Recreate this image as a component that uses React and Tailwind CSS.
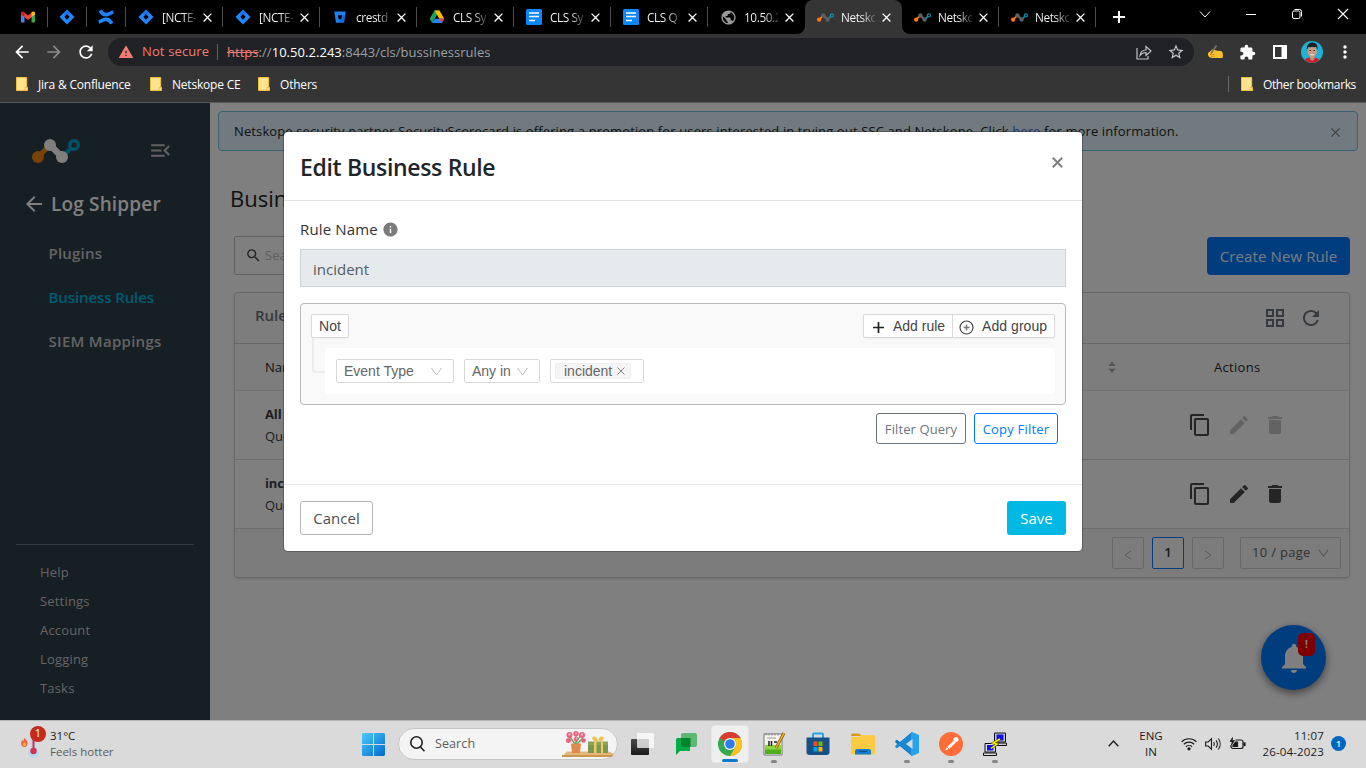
import React from "react";
import {
  MdArrowBack, MdArrowForward, MdRefresh, MdMenuOpen, MdSearch, MdGridView,
  MdContentCopy, MdEdit, MdDelete, MdNotifications, MdExtension, MdStarBorder,
  MdMoreVert, MdWarning, MdClose, MdPublic, MdInfo,
} from "react-icons/md";

const JiraIcon = () => (
  <svg className="size-4 shrink-0" viewBox="0 0 16 16">
    <path d="M8 .5 15.5 8 8 15.5.5 8z" fill="#1f87ff" />
    <path d="M8 .5 11.5 4 8 7 5 4.500z" fill="#0a62d8" opacity=".5" />
    <path d="M8 5.300 10.700 8 8 10.700 5.300 8z" fill="#000" />
  </svg>
);

const ConfluenceIcon = () => (
  <svg className="size-4 shrink-0" viewBox="0 0 16 16">
    <path d="M.6 2.200 3.800.6C6 4.200 8 4.600 11.500 2.800L14.500 1.300l1.300 3.200-3.300 1.700C7 9 3.500 7.500.6 2.200z" fill="#1f7ff5" />
    <path d="M15.400 13.800l-3.200 1.600C10 11.800 8 11.400 4.500 13.200L1.500 14.700.2 11.500l3.300-1.700C9 7 12.500 8.500 15.400 13.800z" fill="#1f87ff" />
  </svg>
);

const GmailIcon = () => (
  <svg className="h-[12px] w-4 shrink-0" viewBox="0 0 16 12">
    <path d="M1 2v8.500c0 .6.400 1 1 1h2.500V5z" fill="#4285f4" />
    <path d="M15 2v8.500c0 .6-.4 1-1 1h-2.500V5z" fill="#34a853" />
    <path d="M4 1.300 8 4.500l4-3.200V6L8 9 4 6z" fill="#ea4335" />
    <path d="M1 2.200C1 .5 2.500-.1 3.800.9L4.500 1.300V6L1 3.400z" fill="#c5221f" />
    <path d="M15 2.200c0-1.700-1.500-2.300-2.800-1.300l-.7.400V6L15 3.400z" fill="#fbbc04" />
  </svg>
);

const BitbucketIcon = () => (
  <svg className="size-4 shrink-0" viewBox="0 0 16 16">
    <path d="M2.300 2.500h11.400L12 13.800H4z" fill="#1f7ff5" />
    <path d="M6 6.300h4l-.6 4H6.600z" fill="#000" />
    <path d="M13.300 6.300H10l-.6 4-3.500 3.500H12z" fill="#0a5bd0" opacity=".6" />
  </svg>
);

const DriveIcon = () => (
  <svg className="size-4 shrink-0" viewBox="0 0 16 16">
    <path d="M5.500 1.500h5L8 5.700 3.200 14 .7 9.800z" fill="#13a35d" />
    <path d="M5.500 1.500h5L15.300 9.800h-5z" fill="#ffba00" />
    <path d="M5.700 9.800h9.600L12.800 14H3.200z" fill="#2684fc" />
    <path d="M10.300 9.800h5L12.800 14z" fill="#ea4335" />
  </svg>
);

const DocsIcon = () => (
  <svg className="size-4 shrink-0" viewBox="0 0 16 16">
    <rect width="16" height="16" rx="1.500" fill="#0b87fb" />
    <path d="M3 4h10M3 7.500h10M3 11.500h6" stroke="#fff" strokeWidth="1.600" />
  </svg>
);

const NetskopeMark = ({ className, tone = "#595959", orange = "#f58220", blue = "#1193b5" }) => (
  <svg className={className} viewBox="0 0 48 24">
    <path d="M6 18 18 6" stroke={orange} strokeWidth="5" />
    <path d="M18 6 30 18" stroke={tone} strokeWidth="6.500" />
    <path d="M30 18 38 10" stroke={blue} strokeWidth="4.500" />
    <circle cx="6" cy="18" r="6" fill={orange} />
    <circle cx="18" cy="6" r="6" fill={tone} />
    <circle cx="30" cy="18" r="6" fill={tone} />
    <circle cx="42" cy="6" r="4.300" fill="none" stroke={blue} strokeWidth="3.400" />
  </svg>
);

const NetskopeFav = () => (
  <NetskopeMark className="h-[9px] w-[17px] shrink-0" orange="#ff7a0f" tone="#5d6063" blue="#1191b3" />
);

const Folder = () => (
  <svg className="h-[14px] w-[12px] shrink-0" viewBox="0 0 12 14">
    <path d="M.5.500h10.200v9.500l1 .500v3H.5z" fill="#ffe38d" stroke="#f3bd3f" />
    <path d="M9 13.500v-3h2" fill="none" stroke="#f3bd3f" />
  </svg>
);

const tabs = [
  { icon: <JiraIcon />, title: "[NCTE-" },
  { icon: <JiraIcon />, title: "[NCTE-" },
  { icon: <BitbucketIcon />, title: "crestd" },
  { icon: <DriveIcon />, title: "CLS Sy" },
  { icon: <DocsIcon />, title: "CLS Sy" },
  { icon: <DocsIcon />, title: "CLS Q" },
  { icon: <MdPublic className="size-[17px] shrink-0 text-[#9a9a9a]" />, title: "10.50.2", last: true },
  { icon: <NetskopeFav />, title: "Netsko", active: true },
  { icon: <NetskopeFav />, title: "Netsko" },
  { icon: <NetskopeFav />, title: "Netsko" },
];

function Tab({ icon, title, active, last }) {
  return (
    <div className={active ? "relative flex h-[34px] w-[97px] items-center rounded-t-[8px] bg-[#353535] pl-3" : "relative flex h-[34px] w-[97px] items-center pl-3"}>
      <div className="flex w-4 shrink-0 justify-center">{icon}</div>
      <div className="ml-2 w-[34px] overflow-hidden bg-linear-to-r from-white from-60% to-white/20 bg-clip-text text-[11.800px] leading-5 tracking-[-0.4px] whitespace-nowrap text-transparent">{title}</div>
      <MdClose className="ml-[4px] size-[15px] shrink-0 text-white" />
      {!active && !last && <div className="ml-auto h-5 w-px bg-[#4d4d4d]" />}
      {active && (
        <>
          <svg className="absolute bottom-0 -left-2 size-2" viewBox="0 0 8 8"><path d="M8 0v8H0a8 8 0 0 0 8-8z" fill="#353535" /></svg>
          <svg className="absolute -right-2 bottom-0 size-2" viewBox="0 0 8 8"><path d="M0 0v8h8a8 8 0 0 1-8-8z" fill="#353535" /></svg>
        </>
      )}
    </div>
  );
}

function TabStrip() {
  return (
    <div className="flex h-[34px] shrink-0 items-center bg-black pl-[9px]">
      {[<GmailIcon key="g" />, <JiraIcon key="j" />, <ConfluenceIcon key="c" />].map((icon, i) => (
        <div key={i} className="flex h-[34px] w-[39px] items-center justify-between pl-[11px]">
          {icon}
          <div className="h-5 w-px bg-[#4d4d4d]" />
        </div>
      ))}
      {tabs.map((t, i) => <Tab key={i} {...t} />)}
      <svg className="ml-[17px] size-3" viewBox="0 0 12 12"><path d="M6 0v12M0 6h12" stroke="#fff" strokeWidth="2" /></svg>
      <div className="mb-[6px] ml-auto flex w-[167px] items-center gap-[34px]">
        <svg className="size-3 shrink-0" viewBox="0 0 12 12"><path d="M1 3.500 6 9l5-5.500" fill="none" stroke="#fff" /></svg>
        <svg className="size-3 shrink-0" viewBox="0 0 12 12"><path d="M1 6.500h10" stroke="#fff" /></svg>
        <svg className="size-3 shrink-0" viewBox="0 0 12 12" fill="none" stroke="#fff"><rect x="1.500" y="3" width="7.500" height="7.500" rx="1.500" /><path d="M3.500 1.500H8.500a2 2 0 0 1 2 2V8.500" /></svg>
        <svg className="size-3 shrink-0" viewBox="0 0 12 12"><path d="M1 1l10 10M11 1 1 11" stroke="#fff" strokeWidth="1.100" /></svg>
      </div>
    </div>
  );
}

function Toolbar() {
  return (
    <div className="flex h-9 shrink-0 items-center bg-[#353535] pl-[12px]">
      <MdArrowBack className="size-5 text-white" />
      <MdArrowForward className="ml-3 size-5 text-[#8a8a8a]" />
      <MdRefresh className="ml-3 size-5 text-white" />
      <div className="ml-[12px] flex h-7 w-[1086px] items-center rounded-full bg-[#202124] pl-[10px]">
        <MdWarning className="size-4 text-[#f47c73]" />
        <span className="ml-[8px] w-[68px] text-[13px] tracking-[0.13px] whitespace-nowrap text-[#f47c73]">Not secure</span>
        <div className="ml-[7px] h-4 w-px bg-[#606164]" />
        <div className="mt-px ml-[9px] flex text-[13px] tracking-[0.040px] whitespace-nowrap text-[#9aa0a6]">
          <span className="text-[#f47c73] line-through">https</span>://<span className="text-white">10.50.2.243</span>:8443/cls/bussinessrules
        </div>
        <svg className="ml-auto size-4" viewBox="0 0 16 16" fill="none" stroke="#c0c2c5" strokeWidth="1.200"><path d="M1 4v11h11v-3" /><path d="M4 11.500c.5-4 2.500-5.500 6-5.500V2.500L15 7l-5 4.500V8.500c-3 0-4.500 1-6 3z" /></svg>
        <MdStarBorder className="mr-[9px] ml-[15px] size-[18px] text-[#c8c9cb]" />
      </div>
      <svg className="ml-[13px] size-4" viewBox="0 0 16 16"><path d="M1 9 6 5 9 6.500l5.500.8c1.500.7 1.700 4.700 1 6.700H5.500C2.500 14 .5 12 1 9z" fill="#fbc02d" /><path d="M4 9.500 9.500 1.500" stroke="#777" strokeWidth="1.600" /><path d="M3 10.500h4.500M4 12.300h3.500" stroke="#c98a14" strokeWidth=".7" /></svg>
      <MdExtension className="ml-[16px] size-[17px] text-white" />
      <svg className="ml-[17px] h-[14px] w-[14px]" viewBox="0 0 14 14"><path d="M0 0h14v14H0zM2 2v10h6.500V2z" fill="#fff" fillRule="evenodd" /></svg>
      <svg className="ml-[14px] size-[22px]" viewBox="0 0 22 22">
        <circle cx="11" cy="11" r="11" fill="#1fb2d6" />
        <path d="M3.500 19C5 17 8 16.500 11 16.500s6 .5 7.500 2.500a11 11 0 0 1-15 0z" fill="#c8202c" />
        <path d="M9 14h4.500v4L11 20l-2-2z" fill="#c58d70" />
        <ellipse cx="11.200" cy="10.500" rx="4.500" ry="6" fill="#cf9a80" />
        <path d="M5.800 9C5.500 3.500 8 1.500 11.500 1.500c4 0 5.500 3 5 7.500l-1.300-3-8 .2z" fill="#1d2227" />
        <path d="M9.500 13.500q1.700 1 3.500 0" stroke="#fff" fill="none" strokeWidth=".8" />
        <path d="M8.500 9.500h1.500M12.500 9.500H14" stroke="#40241a" />
      </svg>
      <MdMoreVert className="ml-[12px] size-5 text-white" />
    </div>
  );
}

function Bookmarks() {
  return (
    <div className="flex h-[33px] shrink-0 items-center border-b border-[#5a5a5a] bg-[#353535] pr-[10px] pb-[4px] pl-4 text-[12px] tracking-[-0.2px] whitespace-nowrap text-white">
      <Folder /><span className="mt-px ml-[10px] w-[112px]">Jira &amp; Confluence</span>
      <Folder /><span className="mt-px ml-[10px] w-[86px]">Netskope CE</span>
      <Folder /><span className="mt-px ml-[10px]">Others</span>
      <div className="ml-auto h-4 w-px bg-[#6b6b6b]" />
      <div className="ml-[12px]"><Folder /></div><span className="mt-px ml-[10px] w-[93px] tracking-[-0.37px]">Other bookmarks</span>
    </div>
  );
}

function Sidebar() {
  return (
    <div className="flex w-[210px] shrink-0 flex-col bg-[#2d3e48]">
      <div className="mt-[36px] flex h-6 items-center pl-8">
        <NetskopeMark className="h-6 w-12" tone="#fff" orange="#f5820a" blue="#00a3cc" />
        <MdMenuOpen className="mb-[2px] ml-[68px] size-[25px] text-[#c4c4c4]" />
      </div>
      <div className="mt-[26px] flex h-[30px] items-center pl-[22px]">
        <MdArrowBack className="size-6 text-white" />
        <span className="ml-[5px] text-[19px] font-semibold tracking-[0.16px] text-white">Log Shipper</span>
      </div>
      <div className="mt-[12px] flex flex-col pl-[48.500px] text-[15px] font-semibold tracking-[-0.1px] text-[#c8c8c8]">
        <div className="flex h-11 items-center tracking-[0.2px]">Plugins</div>
        <div className="flex h-11 items-center text-[#00b7e0]">Business Rules</div>
        <div className="flex h-11 items-center tracking-[0.280px]">SIEM Mappings</div>
      </div>
      <div className="mx-4 mt-auto border-t border-[#6b757b]" />
      <div className="mt-[13px] mb-[17px] flex flex-col pl-10 text-[13px] tracking-[0.18px] text-[#c8c8c8]">
        {["Help", "Settings", "Account", "Logging", "Tasks"].map((t) => (
          <div key={t} className="flex h-[29px] items-center">{t}</div>
        ))}
      </div>
    </div>
  );
}

function Row({ name, muted }) {
  return (
    <div className="flex h-[69px] items-center justify-between border-b border-[#dadada] bg-white pl-[30px]">
      <div className="text-[13px] leading-[22px] tracking-[-0.1px] text-[#3c4045]">
        <div className="font-bold">{name}</div>
        <div>Query: filters</div>
      </div>
      <div className="mr-[62px] flex items-center text-[#4a4a4a]">
        <MdContentCopy className="size-6" />
        <MdEdit className={muted ? "ml-[15px] size-6 text-[#c6c6c6]" : "ml-[15px] size-6"} />
        <MdDelete className={muted ? "ml-3 size-6 text-[#c6c6c6]" : "ml-3 size-6"} />
      </div>
    </div>
  );
}

function MainPage() {
  return (
    <div className="flex min-w-0 flex-1 flex-col bg-white px-2 pt-2">
      <div className="flex h-10 shrink-0 items-center rounded-[4px] border border-[#70c4e0] bg-[#e2f5fc] pr-[15px] pl-[15px] text-[13px] tracking-[0.120px] whitespace-nowrap text-[#202428]">
        <span className="mt-[2px]">Netskope security partner SecurityScorecard is offering a promotion for users interested in trying out SSC and Netskope. Click <span className="text-[#3f6ff0]">here</span> for more information.</span>
        <svg className="mt-[2px] ml-auto size-[13px]" viewBox="0 0 14 14"><path d="M2.500 2.500l9 9M11.500 2.500l-9 9" stroke="#777" strokeWidth="1.100" /></svg>
      </div>
      <div className="mt-[30px] pl-3 text-[22px] leading-[34px] text-[#212529]">Business Rules</div>
      <div className="mt-[21px] flex items-center justify-between pr-2 pl-4">
        <div className="flex h-[39px] w-[300px] items-center rounded-[2px] border border-[#c4c4c4] pl-[10px] text-[13px] text-[#bcbcbc]">
          <MdSearch className="size-[17px] text-[#444]" /><span className="ml-[3px]">Search</span>
        </div>
        <div className="flex h-[38px] w-[143px] items-center justify-center rounded-[4px] bg-[#007bff] pt-px text-[15px] tracking-[0.1px] text-[#f2f6ff]">Create New Rule</div>
      </div>
      <div className="mt-[17px] mr-2 ml-4 flex flex-col rounded-[4px] border border-[#d0d0d0] bg-[#fafafa] shadow-sm">
        <div className="flex h-[51px] items-center justify-between border-b border-[#d0d0d0] pr-[26px] pl-5">
          <span className="mb-[6px] text-[15px] font-semibold text-[#6c757d]">Rules</span>
          <div className="flex gap-3 text-[#6c757d]"><MdGridView className="size-6" /><MdRefresh className="size-6" /></div>
        </div>
        <div className="flex h-[47px] items-center border-b border-[#e6e6e6] pl-[30px] text-[13px] font-medium text-[#26292d]">
          <span className="mt-[2px]">Name</span>
          <svg className="mt-px ml-auto h-[13px] w-[8px]" viewBox="0 0 10 15" fill="#aaa"><path d="M5 .5 9.500 5.500h-9zM5 14 .5 9h9z" /></svg>
          <span className="mt-[2px] mr-[87px] ml-[98px] w-12 tracking-[0.3px]">Actions</span>
        </div>
        <Row name="All" muted />
        <Row name="incident" />
        <div className="flex h-[48px] items-center justify-end gap-2 rounded-b-[4px] bg-[#f8f8f8] pr-2 text-[13px]">
          <div className="flex size-8 items-center justify-center rounded-[2px] border border-[#d0d0d0] text-[#b5b5b5]"><svg className="mt-1 size-3" viewBox="0 0 12 12"><path d="M9 2 3 6 9 10" fill="none" stroke="currentColor" /></svg></div>
          <div className="flex size-8 items-center justify-center rounded-[2px] border border-[#007bff] bg-white font-semibold text-[#333]">1</div>
          <div className="flex size-8 items-center justify-center rounded-[2px] border border-[#d0d0d0] text-[#b5b5b5]"><svg className="mt-1 size-3" viewBox="0 0 12 12"><path d="M3 2 9 6 3 10" fill="none" stroke="currentColor" /></svg></div>
          <div className="ml-2 flex h-8 w-[101px] items-center rounded-[2px] border border-[#d0d0d0] pl-[11px] whitespace-nowrap text-[#666]">
            <span className="w-[59px] tracking-[0.300px]">10 / page</span>
            <svg className="ml-[7px] size-[11px]" viewBox="0 0 12 12"><path d="M1 2l5 7 5-7" fill="none" stroke="#aaa" strokeWidth="1.100" /></svg>
          </div>
        </div>
      </div>
    </div>
  );
}

const Caret = () => (
  <svg className="size-[11px]" viewBox="0 0 11 11"><path d="M.5 2l5 7 5-7" fill="none" stroke="#bdbdbd" /></svg>
);

function Modal() {
  return (
    <div className="absolute top-[29px] left-[284px] flex h-[419px] w-[798px] flex-col rounded-[4px] bg-white shadow-[0_0_0_1px_rgba(0,0,0,0.25)]">
      <div className="flex h-[69px] shrink-0 items-center border-b border-[#dee2e6] pr-[19px] pl-4">
        <span className="mt-[2px] text-[23px] font-semibold tracking-[-0.330px] text-[#212529]">Edit Business Rule</span>
        <svg className="mb-[7px] ml-auto size-[11px]" viewBox="0 0 11 11"><path d="M.8.800l9.400 9.400M10.200.800.800 10.200" stroke="#808080" strokeWidth="2" /></svg>
      </div>
      <div className="flex flex-1 flex-col px-4">
        <div className="mt-[16px] flex h-6 items-center">
          <span className="text-[15px] tracking-[0.150px] text-[#333]">Rule Name</span>
          <MdInfo className="mt-px ml-[4px] size-[17px] text-[#7b7b7b]" />
        </div>
        <div className="mt-[8px] flex h-[38px] items-center border border-[#ced4da] bg-[#e6eaed] pt-[2px] pl-3 text-[15px] text-[#545b62]">incident</div>
        <div className="mt-4 h-[102px] rounded-[4px] border border-[#b9b9b9] bg-[#f9f9f9] px-[10px] pt-[10px] font-['Liberation_Sans',sans-serif] text-[14px] text-[#444]">
          <div className="flex justify-between">
            <div className="flex h-6 w-[38px] items-center justify-center rounded-[2px] border border-[#d9d9d9] bg-white shadow-[0_1px_1px_rgba(0,0,0,0.04)]">Not</div>
            <div className="flex h-6 rounded-[2px] border border-[#d9d9d9] bg-white whitespace-nowrap shadow-[0_1px_1px_rgba(0,0,0,0.04)]">
              <div className="flex w-[89px] items-center border-r border-[#d9d9d9] pl-[9px]">
                <svg className="mt-[2px] size-[11px]" viewBox="0 0 11 11"><path d="M5.500 0v11M0 5.500h11" stroke="#222" strokeWidth="1.700" /></svg>
                <span className="ml-[9px]">Add rule</span>
              </div>
              <div className="flex w-[101px] items-center pl-[6px]">
                <svg className="mt-[2px] size-[15px]" viewBox="0 0 15 15" fill="none"><circle cx="7.500" cy="7.500" r="6.500" stroke="#444" strokeWidth="1.200" /><path d="M7.500 4.500v6M4.500 7.500h6" stroke="#777" strokeWidth="1.500" /></svg>
                <span className="ml-[8px] tracking-[0.060px]">Add group</span>
              </div>
            </div>
          </div>
          <div className="flex">
            <div className="mr-0 ml-px h-[35px] w-[13px] rounded-bl-[4px] border-b-2 border-l-2 border-[#ececec]" />
            <div className="mt-[10px] flex h-[46px] flex-1 items-center gap-[10px] rounded-[4px] bg-white pl-[11px] text-[#666]">
              <div className="flex h-6 w-[118px] items-center justify-between rounded-[2px] border border-[#d9d9d9] pr-[11px] pl-[7px]"><span>Event Type</span><Caret /></div>
              <div className="flex h-6 w-[76px] items-center justify-between rounded-[2px] border border-[#d9d9d9] pr-[11px] pl-[7px] whitespace-nowrap"><span>Any in</span><Caret /></div>
              <div className="flex h-6 w-[94px] items-center rounded-[2px] border border-[#d9d9d9] pl-1">
                <div className="flex h-4 w-[76px] items-center rounded-[2px] border border-[#efefef] bg-[#f5f5f5] pl-2">
                  <span className="leading-4">incident</span>
                  <svg className="mb-px ml-[5px] size-[8px]" viewBox="0 0 8 8"><path d="M.5.500l7 7M7.500.500l-7 7" stroke="#808080" /></svg>
                </div>
              </div>
            </div>
          </div>
        </div>
        <div className="mt-2 mr-2 flex justify-end gap-2 text-[13px] whitespace-nowrap">
          <div className="flex h-[31px] w-[90px] items-center justify-center rounded-[3px] border border-[#6c757d] pt-[2px] tracking-[0.1px] text-[#6c757d]">Filter Query</div>
          <div className="flex h-[31px] w-[84px] items-center justify-center rounded-[3px] border border-[#007bff] pt-[2px] tracking-[0.200px] text-[#007bff]">Copy Filter</div>
        </div>
      </div>
      <div className="flex h-[67px] shrink-0 items-center justify-between border-t border-[#e2e4e6] px-4 text-[15px]">
        <div className="flex h-[34px] w-[73px] items-center justify-center rounded-[3px] border border-[#b5b5b5] text-[#505050]">Cancel</div>
        <div className="flex h-[34px] w-[59px] items-center justify-center rounded-[3px] bg-[#00b8e4] text-white">Save</div>
      </div>
    </div>
  );
}

const taskIcons = [
  { el: <svg className="size-6" viewBox="0 0 24 24"><defs><linearGradient id="tv" x1="0" y1="0" x2="0" y2="1"><stop stopColor="#484848" /><stop offset="1" stopColor="#1c1c1c" /></linearGradient></defs><rect x="1" y="7" width="18" height="16" rx="1" fill="url(#tv)" /><rect x="7" y="1" width="17" height="15" rx="1" fill="#fff" opacity=".75" /></svg> },
  { el: <svg className="size-6" viewBox="0 0 24 24"><path d="M2 8c0-1.500 1-2 2-2h12v13H6l-4 4z" fill="#00ac47" /><rect x="7" y="1" width="16" height="14" rx="2" fill="#5bb974" /><path d="M7 6h9.500v9H9a2 2 0 0 1-2-2z" fill="#00832d" /></svg> },
  {
    active: true,
    el: <svg className="size-6" viewBox="0 0 24 24"><circle cx="12" cy="12" r="12" fill="#34a853" /><path d="M12 0a12 12 0 0 1 10.400 6H12a6 6 0 0 0-5.200 3L1.600 6A12 12 0 0 1 12 0z" fill="#dd3b30" /><path d="M22.400 6A12 12 0 0 1 12 24l5.200-9a6 6 0 0 0 0-6L14 6z" fill="#fcc31e" /><circle cx="12" cy="12" r="6" fill="#fff" /><circle cx="12" cy="12" r="4.800" fill="#2f7de9" /></svg>,
  },
  {
    dot: true,
    el: <svg className="size-6" viewBox="0 0 24 24"><path d="M2 2h18v21H2z" fill="#f4f4ee" stroke="#777" /><path d="M3 13h16v9H3z" fill="#8ed63f" /><path d="M3 17.500h16V22H3z" fill="#4fae1c" /><path d="M4 1v2.500M7 1v2.500M10 1v2.500M13 1v2.500M16 1v2.500" stroke="#888" /><path d="M5 6h9" stroke="#999" /><path d="M7 9v5M9.500 9v5M12 10h3" stroke="#222" strokeWidth="1.500" /><path d="M14 16 22 1" stroke="#8a5a14" strokeWidth="3" /><path d="M14 16 22 1" stroke="#f3b61f" strokeWidth="1.500" /></svg>,
  },
  { el: <svg className="size-6" viewBox="0 0 24 24"><path d="M7 6V2.500a1 1 0 0 1 1-1h8a1 1 0 0 1 1 1V6" fill="none" stroke="#20a5ea" strokeWidth="2" /><path d="M.5 5.500h23V20a3 3 0 0 1-3 3h-17a3 3 0 0 1-3-3z" fill="#174f87" /><path d="M7.500 9.500h4V14h-4z" fill="#f25022" /><path d="M12.500 9.500h4V14h-4z" fill="#7fba00" /><path d="M7.500 15h4v4.500h-4z" fill="#00a4ef" /><path d="M12.500 15h4v4.500h-4z" fill="#ffb900" /></svg> },
  { el: <svg className="size-6" viewBox="0 0 24 24"><path d="M0 3a1.500 1.500 0 0 1 1.500-1.500H8L11 4H0z" fill="#dc9b12" /><path d="M0 5h8l3-2h11.500A1.500 1.500 0 0 1 24 4.500V21a1.500 1.500 0 0 1-1.500 1.500h-21A1.500 1.500 0 0 1 0 21z" fill="#fdcb43" /><path d="M4 22.500V19a2 2 0 0 1 2-2h12a2 2 0 0 1 2 2v3.500z" fill="#157cd0" /><path d="M8 19.500h8" stroke="#0a4d8c" strokeWidth="1.200" /></svg> },
  {
    dot: true,
    el: <svg className="size-6" viewBox="0 0 24 24"><path d="M17 0 5.500 10.500 2 7.800.300 8.700v1.500L17 24z" fill="#0a73bd" /><path d="M17 24 5.500 13.500 2 16.200.300 15.300v-1.500L17 0z" fill="#1787d2" /><path d="M17 0l7 3v18l-7 3-1-1V1z" fill="#27a3ee" /><path d="M17.500 7v10L11 12z" fill="#d9d9d9" /></svg>,
  },
  {
    dot: true,
    el: <svg className="size-6" viewBox="0 0 24 24"><circle cx="12" cy="12" r="12" fill="#ff6c37" /><path d="M6 18.500l2-3.500 7-6.500 2 2-7 6.500z" fill="#fff" /><circle cx="17" cy="7.500" r="2.500" fill="#fff" /><path d="M8 15l2 2" stroke="#ff6c37" strokeWidth=".8" /></svg>,
  },
  {
    dot: true,
    el: <svg className="size-6" viewBox="0 0 24 24"><path d="M11.500 1h11v9h-11zM11 11h12.500v2.500H11z" fill="#c6cad0" stroke="#111" /><path d="M13.500 2.500h7v6h-7z" fill="#1010e0" /><path d="M2 11.500h10.500V20H2zM.5 21h13v2.500H.5z" fill="#dcdfe3" stroke="#111" /><path d="M4 13h6.500v5.500H4z" fill="#1010e0" /><path d="M17 7 10 11l4 1-6 4.500" stroke="#333" strokeWidth="2.400" fill="none" /><path d="M17 7 10 11l4 1-6 4.500" stroke="#ffee00" strokeWidth="1.500" fill="none" /></svg>,
  },
];

function SearchArt() {
  return (
    <svg className="ml-auto h-[26px] w-[52px]" viewBox="0 0 52 26">
      <path d="M5 20.500h42l5 2.500-1.500 2.500H0z" fill="#e3b67c" />
      <path d="M0 24h51l-1 2H0z" fill="#c99656" />
      <path d="M13 13 8 6M14 13 14 4M15 13 21 7M13 13 19 4" stroke="#5d9a4d" strokeWidth="1.300" />
      <g fill="#e5627f"><circle cx="7.500" cy="4" r="3" /><circle cx="14" cy="2.800" r="2.700" /><circle cx="20" cy="4" r="3" /><circle cx="6.500" cy="9.500" r="2.500" /><circle cx="21.500" cy="9.500" r="2.300" /><circle cx="14" cy="8" r="2.300" /></g>
      <g fill="#f8b3c4"><circle cx="7.500" cy="3.500" r="1.200" /><circle cx="20" cy="3.500" r="1.200" /><circle cx="14.500" cy="7.500" r="1" /><circle cx="14" cy="2.500" r="1" /></g>
      <path d="M9 12.500h10l-1 9.500h-8z" fill="#e08a4c" />
      <path d="M26 10.500h20v11.500H26z" fill="#8ba35a" />
      <path d="M26 14h20v8H26z" fill="#7a9650" />
      <path d="M32 10.500h2.500V22H32zM39 10.500h2V22h-2z" fill="#f0cb62" />
      <path d="M36 10.500c-7 0-7-5.500-3.500-5 2 .4 3.500 2.500 3.500 5zm0 0c7 0 7-5.500 3.500-5-2 .4-3.500 2.500-3.500 5z" fill="#eec257" />
    </svg>
  );
}

function Taskbar() {
  return (
    <div className="flex h-12 shrink-0 items-center border-t border-[#b4b4b4] bg-[#dadada] text-[11.500px] text-[#1b1b1b]">
      <div className="flex w-[362px] items-center pl-5">
        <div className="relative mb-[2px] h-8 w-[30px]">
          <svg className="size-full" viewBox="0 0 30 32">
            <path d="M4.500 10C6 12 8 13 7.500 16c-.5 2.500-2 3-3.200 3S1 18 1 15.500C1 13.500 2 13 2.500 12c.5 1 1 1 1 1 .5-1 0-2 1-3z" fill="#f4623c" />
            <path d="M4.500 14c1 1 1.500 2 1.300 3-.3 1.300-2.700 1.300-3 0-.2-1.300 1-1.500 1.700-3z" fill="#ffb63d" />
            <path d="M10.500 8h6v12a5.500 5.500 0 1 1-6 0z" fill="#b9d9f2" />
            <path d="M12.500 10h2v11h-2z" fill="#d62f50" /><circle cx="13.500" cy="23" r="3.200" fill="#d62f50" />
          </svg>
          <div className="absolute top-[-2px] left-[10px] flex size-4 items-center justify-center rounded-full bg-[#c42b1c] text-[11px] text-white">1</div>
        </div>
        <div className="mb-[2px] leading-4 whitespace-nowrap"><div>31°C</div><div className="text-[#5c5c5c]">Feels hotter</div></div>
      </div>
      <svg className="size-[23px]" viewBox="0 0 23 23">
        <defs><linearGradient id="win" x1="0" y1="0" x2="1" y2="1"><stop stopColor="#4ccbfb" /><stop offset="1" stopColor="#0069cf" /></linearGradient></defs>
        <path d="M1 0h10v11H0V1zM12 0h10l1 1v10H12zM0 12h11v11H1l-1-1zM12 12h11v10l-1 1H12z" fill="url(#win)" />
      </svg>
      <div className="mb-px ml-[13px] flex h-8 w-[220px] items-center rounded-full border border-[#c6c6c6] bg-[#f4f4f4] pr-[3px] pl-[10px]">
        <svg className="size-4" viewBox="0 0 16 16" fill="none" stroke="#1f1f1f" strokeWidth="1.600"><circle cx="7.500" cy="6.500" r="5.700" /><path d="M11.500 11l4 4.300" /></svg>
        <span className="mt-px ml-[10px] text-[12.500px] tracking-[0.1px] text-[#5c5c5c]">Search</span>
        <SearchArt />
      </div>
      <div className="mb-px ml-[2px] flex">
        {taskIcons.map((t, i) => (
          <div key={i} className="flex h-12 w-[44.100px] flex-col items-center justify-center">
            <div className={t.active ? "relative flex h-[38px] w-[38px] items-center justify-center rounded-[4px] border border-[#e6e6e6] bg-[#efefef]" : "relative flex h-[38px] w-[38px] items-center justify-center"}>
              {t.el}
              {t.active && <div className="absolute bottom-0 left-[10px] h-[3px] w-4 rounded-full bg-[#0d78d4]" />}
              {t.dot && <div className="absolute bottom-0 left-4 h-[3px] w-[6px] rounded-full bg-[#858585]" />}
            </div>
          </div>
        ))}
      </div>
      <div className="mb-[2px] ml-auto flex items-center pr-5">
        <svg className="h-[7px] w-[11px]" viewBox="0 0 11 7"><path d="M.7 6.200 5.500 1l4.800 5.200" fill="none" stroke="#222" strokeWidth="1.400" /></svg>
        <div className="ml-[19px] w-[26px] text-center leading-4"><div>ENG</div><div>IN</div></div>
        <svg className="ml-[17px] h-[14px] w-4" viewBox="0 0 16 14" fill="none" stroke="#1b1b1b" strokeWidth="1.200"><path d="M.6 4.800a10.500 10.500 0 0 1 14.800 0M2.800 7.300a7.400 7.400 0 0 1 10.400 0M5 9.700a4.300 4.300 0 0 1 6 0" /><circle cx="8" cy="11.800" r="1" fill="#1b1b1b" /></svg>
        <svg className="ml-2 h-[14px] w-[17px]" viewBox="0 0 17 14" fill="none" stroke="#1b1b1b" strokeWidth="1.100"><path d="M.6 5h2.500L6.500 1.800v10.400L3.100 9H.6zM8.700 5a3.500 3.500 0 0 1 0 4M11 3.300a6 6 0 0 1 0 7.400M13.300 1.500a9 9 0 0 1 0 11" /></svg>
        <svg className="ml-[7px] h-[14px] w-[17px]" viewBox="0 0 17 14" fill="none" stroke="#1b1b1b" strokeWidth="1.200"><path d="M6.500 3H12a2 2 0 0 1 2 2v4.500a2 2 0 0 1-2 2H4a2 2 0 0 1-2-2V8" /><path d="M15 6h1v2.500h-1z" fill="#1b1b1b" /><path d="M4 8.500 6.500 5H8.500v4.500H4z" fill="#1b1b1b" /><path d="M3.500.500 1 4.500h2.200L2.500 8 5.500 3.500H3.300z" fill="#1b1b1b" strokeWidth=".7" /></svg>
        <div className="ml-[14px] w-[64px] text-right leading-4 tracking-[0.150px] whitespace-nowrap"><div>11:07</div><div>26-04-2023</div></div>
        <div className="ml-[7px] flex size-[15px] items-center justify-center rounded-full bg-[#0067c0] text-[9px] font-semibold text-white">1</div>
      </div>
    </div>
  );
}

export default function App() {
  return (
    <div className="flex h-[768px] w-[1366px] flex-col overflow-hidden font-['Open_Sans','Noto_Sans',sans-serif]">
      <TabStrip />
      <Toolbar />
      <Bookmarks />
      <div className="relative flex min-h-0 flex-1 overflow-hidden">
        <Sidebar />
        <MainPage />
        <div className="absolute top-[522px] left-[1261px] flex size-[65px] items-center justify-center rounded-full bg-[#007bff] shadow-[0_3px_8px_rgba(0,0,0,0.5)]">
          <MdNotifications className="size-9 text-white" />
          <div className="absolute top-2 left-[37px] flex h-[23px] w-[17px] items-center justify-center rounded-[5px] bg-[#ff0000] text-[10px] font-bold text-white">!</div>
        </div>
        <div className="absolute inset-0 bg-black/50" />
        <Modal />
      </div>
      <Taskbar />
    </div>
  );
}
